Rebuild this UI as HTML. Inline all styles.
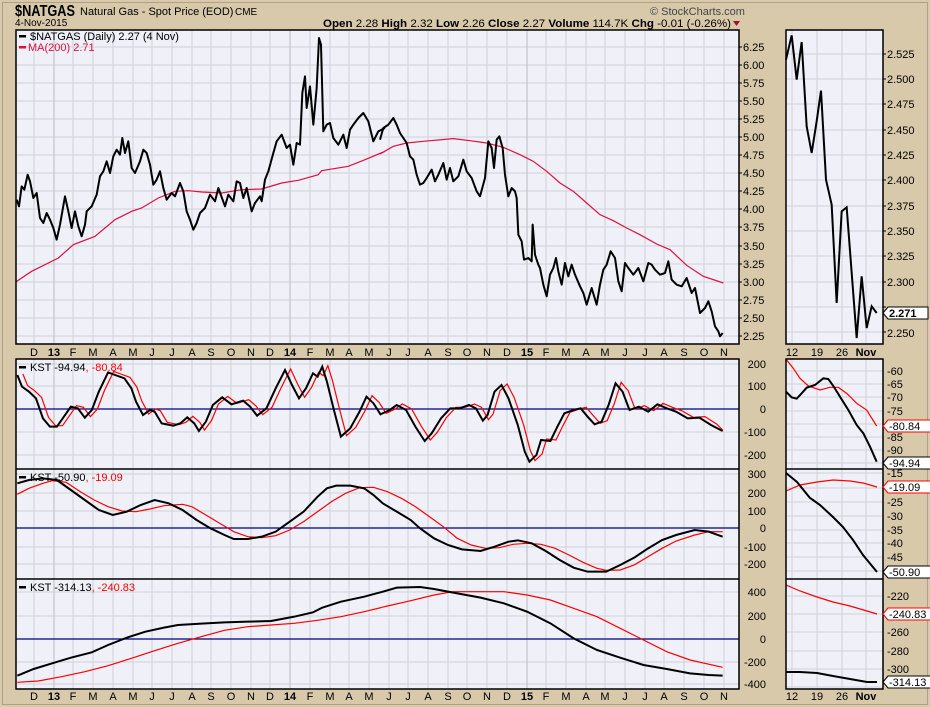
<!DOCTYPE html>
<html><head><meta charset="utf-8"><style>
html,body{margin:0;padding:0;background:#d8c9ab;}
svg{display:block;font-family:"Liberation Sans",sans-serif;}
</style></head><body>
<svg width="930" height="707" viewBox="0 0 930 707" xmlns="http://www.w3.org/2000/svg">
<rect x="0" y="0" width="930" height="707" fill="#d8c9ab"/>
<rect x="2.5" y="2.5" width="925" height="702" fill="none" stroke="#b0a08a" stroke-width="1"/>
<!-- header -->
<text x="15" y="16" font-size="16" font-weight="bold" fill="#000" textLength="60" lengthAdjust="spacingAndGlyphs">$NATGAS</text>
<text x="80" y="15" font-size="11" fill="#000">Natural Gas - Spot Price (EOD)</text>
<text x="235" y="15" font-size="10" fill="#000">CME</text>
<text x="650" y="15" font-size="11" fill="#444">© StockCharts.com</text>
<text x="15" y="26" font-size="10" fill="#000">4-Nov-2015</text>
<text x="323" y="27" font-size="11" fill="#000" textLength="408" lengthAdjust="spacingAndGlyphs"><tspan font-weight="bold">Open</tspan> 2.28 <tspan font-weight="bold">High</tspan> 2.32 <tspan font-weight="bold">Low</tspan> 2.26 <tspan font-weight="bold">Close</tspan> 2.27 <tspan font-weight="bold">Volume</tspan> 114.7K <tspan font-weight="bold">Chg</tspan> -0.01 (-0.26%)</text>
<path d="M733 21h7l-3.5 5z" fill="#a01030"/>

<!-- panel backgrounds -->
<rect x="16" y="30" width="723" height="314" fill="#eff0f8"/>
<rect x="16" y="359" width="723" height="330" fill="#eff0f8"/>
<rect x="786" y="30" width="97" height="314" fill="#eff0f8"/>
<rect x="786" y="359" width="97" height="330" fill="#eff0f8"/>

<path stroke="#d2d2d8" stroke-width="1" fill="none" d="M34 30V344M54 30V344M73 30V344M93 30V344M113 30V344M133 30V344M152 30V344M172 30V344M192 30V344M211 30V344M231 30V344M251 30V344M270 30V344M290 30V344M310 30V344M330 30V344M349 30V344M369 30V344M389 30V344M408 30V344M428 30V344M448 30V344M467 30V344M487 30V344M507 30V344M527 30V344M546 30V344M566 30V344M586 30V344M605 30V344M625 30V344M645 30V344M664 30V344M684 30V344M704 30V344M724 30V344
M34 359V689M54 359V689M73 359V689M93 359V689M113 359V689M133 359V689M152 359V689M172 359V689M192 359V689M211 359V689M231 359V689M251 359V689M270 359V689M290 359V689M310 359V689M330 359V689M349 359V689M369 359V689M389 359V689M408 359V689M428 359V689M448 359V689M467 359V689M487 359V689M507 359V689M527 359V689M546 359V689M566 359V689M586 359V689M605 359V689M625 359V689M645 359V689M664 359V689M684 359V689M704 359V689M724 359V689
M16 47H739M16 65H739M16 83H739M16 101H739M16 119H739M16 137H739M16 155H739M16 173H739M16 191H739M16 209H739M16 227H739M16 246H739M16 264H739M16 282H739M16 300H739M16 318H739M16 336H739
M16 364H739M16 386H739M16 432H739M16 455H739
M16 474H739M16 493H739M16 511H739M16 547H739M16 564H739
M16 592H739M16 616H739M16 662H739M16 684H739
M792 30V344M817 30V344M842 30V344M866 30V344M792 359V689M817 359V689M842 359V689M866 359V689
M786 54H883M786 79H883M786 104H883M786 130H883M786 155H883M786 180H883M786 206H883M786 231H883M786 256H883M786 282H883M786 307H883M786 332H883
M786 371H883M786 384H883M786 397H883M786 411H883M786 424H883M786 437H883M786 450H883M786 463H883
M786 473H883M786 488H883M786 502H883M786 516H883M786 530H883M786 543H883M786 557H883M786 571H883
M786 596H883M786 614H883M786 632H883M786 651H883M786 669H883M786 687H883"/>
<path stroke="#c4c4c8" stroke-width="1.2" d="M54 30V344M290 30V344M527 30V344M54 359V689M290 359V689M527 359V689"/>

<path stroke="#000080" stroke-width="1.2" d="M16 409H739M16 528H739M16 639H739"/>

<!-- main price -->
<g transform="translate(15,28) scale(0.33333)">
<polyline fill="none" stroke="#e0103c" stroke-width="1.2" vector-effect="non-scaling-stroke" points="5,760 50,730 130,690 175,650 240,625 300,575 350,550 380,540 430,510 480,490 520,488 560,492 620,495 680,485 740,483 800,465 850,457 910,440 920,428 1000,415 1050,395 1110,370"/>
<polyline fill="none" stroke="#000" stroke-width="2" vector-effect="non-scaling-stroke" stroke-linejoin="round" points="5,515 12,535 20,475 28,485 38,440 45,460 55,510 65,495 75,570 85,585 95,555 105,575 115,600 125,635 135,590 150,505 160,550 170,600 180,550 190,595 200,625 210,590 215,550 230,535 245,500 255,445 265,430 275,400 285,435 295,385 305,365 315,380 322,330 330,375 340,340 350,420 360,435 375,400 385,365 395,375 405,410 415,470 425,455 435,430 445,480 455,515 470,495 480,505 495,465 505,490 515,550 525,575 535,605 545,585 555,555 570,540 585,500 600,520 610,480 630,535 640,500 655,520 665,460 675,465 685,510 695,480 710,550 720,525 735,505 740,520 750,455 760,430 775,375 785,340 800,320 815,360 825,350 835,410 845,345 855,350 862,195 870,145 875,240 885,175 895,290 905,180 912,30 918,50 925,310 935,290 945,285 955,330 970,350 985,320 995,360 1005,305 1015,290 1030,270 1045,255 1060,280 1075,340 1090,310 1110,300"/>
</g>
<g transform="translate(380,28) scale(0.33333)">
<polyline fill="none" stroke="#e0103c" stroke-width="1.2" vector-effect="non-scaling-stroke" points="0,378 40,355 80,345 130,340 220,332 270,338 320,345 370,358 420,380 460,400 500,430 540,465 580,490 620,525 660,560 700,578 740,600 780,620 830,648 870,665 920,712 970,745 1030,765"/>
<polyline fill="none" stroke="#000" stroke-width="2" vector-effect="non-scaling-stroke" stroke-linejoin="round" points="0,335 10,300 25,290 40,270 50,290 60,315 70,330 80,345 90,385 100,395 110,440 120,470 130,465 140,450 155,425 165,460 175,440 190,405 200,455 210,420 220,460 235,445 250,395 260,430 275,450 290,490 300,505 315,450 325,340 335,360 342,420 350,335 358,325 368,360 375,440 385,505 395,480 405,490 410,510 415,620 425,640 432,695 445,690 455,700 458,590 465,680 475,710 480,720 490,770 500,805 510,740 520,720 528,690 535,730 545,770 555,705 565,745 575,710 585,740 600,775 610,795 620,830 635,780 650,830 660,770 670,725 680,710 692,670 705,690 715,760 725,790 735,705 745,720 760,740 775,720 790,760 805,705 815,710 825,725 840,740 855,735 865,700 875,755 890,770 905,775 920,750 935,795 945,780 960,855 975,840 985,820 995,850 1005,895 1015,910 1020,925 1028,915"/>
</g>

<!-- KST1 -->
<g transform="translate(15,355) scale(0.46555,0.33333)" fill="none">
<polyline stroke="#f00" stroke-width="1.2" vector-effect="non-scaling-stroke" transform="translate(12,-3)" points="5,60 15,95 30,110 45,130 60,190 75,215 90,215 105,185 120,155 135,160 150,188 165,165 180,110 200,52 215,60 235,70 250,100 260,140 275,180 290,165 300,170 315,205 340,212 355,205 370,187 385,205 395,228 410,200 425,150 445,127 465,148 490,137 505,155 520,182 540,160 560,100 580,45 595,90 610,130 625,100 640,55 650,65 660,35 670,80 685,165 700,245 720,220 740,170 755,125 770,145 785,178 805,165 820,150 840,165 860,215 880,258 895,235 915,190 935,160 955,160 975,150 990,160 1005,197 1015,180 1030,110 1045,90 1060,130 1080,210 1095,290 1105,320 1120,300 1130,255 1150,258 1165,215 1180,175 1200,165 1215,160 1230,185 1245,208 1260,200 1275,150 1290,85 1305,110 1320,165 1340,155 1360,170 1380,148 1400,160 1420,170 1445,190 1470,188 1495,210 1508,228"/>
<polyline stroke="#000" stroke-width="2" vector-effect="non-scaling-stroke" points="5,60 15,95 30,110 45,130 60,190 75,215 90,215 105,185 120,155 135,160 150,188 165,165 180,110 200,52 215,60 235,70 250,100 260,140 275,180 290,165 300,170 315,205 340,212 355,205 370,187 385,205 395,228 410,200 425,150 445,127 465,148 490,137 505,155 520,182 540,160 560,100 580,45 595,90 610,130 625,100 640,55 650,65 660,35 670,80 685,165 700,245 720,220 740,170 755,125 770,145 785,178 805,165 820,150 840,165 860,215 880,258 895,235 915,190 935,160 955,160 975,150 990,160 1005,197 1015,180 1030,110 1045,90 1060,130 1080,210 1095,290 1105,320 1120,300 1130,255 1150,258 1165,215 1180,175 1200,165 1215,160 1230,185 1245,208 1260,200 1275,150 1290,85 1305,110 1320,165 1340,155 1360,170 1380,148 1400,160 1420,170 1445,190 1470,188 1495,210 1520,228"/>
</g>
<!-- KST2 & KST3 -->
<g transform="translate(15,465) scale(0.46555,0.33333)" fill="none">
<polyline stroke="#f00" stroke-width="1.2" vector-effect="non-scaling-stroke" points="5,88 30,70 60,55 80,47 110,52 140,80 170,105 200,125 230,138 260,140 290,132 320,122 360,118 380,125 410,150 440,175 470,200 500,215 530,218 560,212 590,195 620,170 650,140 680,110 710,85 740,68 770,67 800,80 830,100 860,125 890,155 920,185 950,220 980,240 1010,250 1040,248 1070,238 1100,235 1130,238 1160,250 1190,270 1220,292 1250,310 1270,316 1300,315 1330,300 1360,275 1390,250 1420,228 1460,210 1490,200 1520,200"/>
<polyline stroke="#000" stroke-width="2" vector-effect="non-scaling-stroke" points="5,55 30,45 60,40 90,45 120,75 150,105 180,135 210,150 240,140 270,120 300,105 330,115 360,135 390,165 420,190 450,210 470,222 500,222 530,215 560,200 590,170 620,140 650,95 670,70 690,62 720,62 750,70 770,90 790,115 820,140 850,165 870,190 900,220 930,240 960,253 1000,258 1030,245 1060,230 1080,226 1110,235 1140,258 1170,285 1200,308 1230,320 1270,320 1300,300 1330,278 1360,250 1390,225 1420,210 1460,195 1490,200 1520,215"/>
<polyline stroke="#f00" stroke-width="1.2" vector-effect="non-scaling-stroke" points="5,652 50,648 100,635 150,620 200,602 250,580 300,557 350,535 400,515 450,496 500,485 550,480 600,475 650,466 700,455 750,440 800,423 850,407 900,390 940,380 1000,380 1050,380 1100,390 1150,405 1200,430 1250,455 1300,490 1350,525 1400,560 1450,585 1520,607"/>
<polyline stroke="#000" stroke-width="2" vector-effect="non-scaling-stroke" points="5,632 40,612 80,595 120,578 165,562 200,540 240,518 280,500 320,488 350,480 400,476 450,472 500,470 550,468 600,455 640,442 660,428 700,410 750,395 790,380 820,368 870,366 900,372 950,385 1000,398 1050,415 1100,440 1150,475 1200,520 1250,555 1300,578 1350,600 1400,612 1450,625 1490,630 1520,632"/>
</g>

<!-- small panels -->
<g transform="translate(780,28) scale(0.33333)">
<polyline fill="none" stroke="#000" stroke-width="2" vector-effect="non-scaling-stroke" points="18,95 35,22 50,155 65,42 80,295 95,375 110,280 123,188 138,455 155,530 170,825 185,550 200,538 230,930 245,745 260,900 275,835 290,855"/>
</g>
<g transform="translate(700,300) scale(0.33333)" fill="none">
<polyline stroke="#f00" stroke-width="1.2" vector-effect="non-scaling-stroke" points="260,180 280,205 300,235 325,258 360,270 390,262 415,262 440,280 470,310 500,330 530,378"/>
<polyline stroke="#000" stroke-width="2" vector-effect="non-scaling-stroke" points="258,275 275,292 290,296 305,280 320,263 345,255 370,235 385,237 400,258 420,290 445,330 470,375 490,400 510,440 530,485"/>
</g>
<polyline fill="none" stroke="#f00" stroke-width="1.2" points="786,491 800,485 817,482 833,480 850,481 863,483 877,487"/>
<polyline fill="none" stroke="#000" stroke-width="2" points="786,473 797,482 810,498 813,500 820,505 833,517 843,527 853,540 863,555 877,572"/>
<polyline fill="none" stroke="#f00" stroke-width="1.2" points="786,585 800,591 817,597 833,602 850,606 867,611 877,614"/>
<polyline fill="none" stroke="#000" stroke-width="2" points="786,672 800,672 817,673 833,676 850,679 867,682 877,682"/>

<!-- panel borders -->
<g fill="none" stroke="#000" stroke-width="1.5">
<rect x="16" y="30" width="723" height="314"/>
<rect x="16" y="359" width="723" height="330"/>
<path d="M16 469H739M16 579H739M786 469H883M786 579H883"/>
<rect x="786" y="30" width="97" height="314"/>
<rect x="786" y="359" width="97" height="330"/>
</g>

<!-- legends -->
<g font-size="11">
<rect x="19" y="35" width="7" height="2.5" fill="#000"/>
<text x="30" y="40" fill="#000">$NATGAS (Daily) 2.27 (4 Nov)</text>
<rect x="19" y="46" width="7" height="2.5" fill="#e0103c"/>
<text x="28" y="51" fill="#e0103c">MA(200) 2.71</text>
<rect x="19" y="366" width="7" height="2.5" fill="#000"/>
<text x="30" y="371" fill="#000">KST -94.94<tspan fill="#f00">, -80.84</tspan></text>
<rect x="19" y="476" width="7" height="2.5" fill="#000"/>
<text x="30" y="481" fill="#000">KST -50.90<tspan fill="#f00">, -19.09</tspan></text>
<rect x="19" y="586" width="7" height="2.5" fill="#000"/>
<text x="30" y="591" fill="#000">KST -314.13<tspan fill="#f00">, -240.83</tspan></text>
</g>

<g font-size="11" fill="#000">
<text x="743" y="51">6.25</text><text x="743" y="69">6.00</text><text x="743" y="87">5.75</text><text x="743" y="105">5.50</text><text x="743" y="123">5.25</text><text x="743" y="141">5.00</text><text x="743" y="159">4.75</text><text x="743" y="177">4.50</text><text x="743" y="195">4.25</text><text x="743" y="213">4.00</text><text x="743" y="231">3.75</text><text x="743" y="250">3.50</text><text x="743" y="268">3.25</text><text x="743" y="286">3.00</text><text x="743" y="304">2.75</text><text x="743" y="322">2.50</text><text x="743" y="340">2.25</text>
</g>
<g font-size="11" fill="#000" text-anchor="end">
<text x="766" y="368">200</text><text x="766" y="390">100</text><text x="766" y="413">0</text><text x="766" y="436">-100</text><text x="766" y="459">-200</text>
<text x="766" y="478">300</text><text x="766" y="497">200</text><text x="766" y="515">100</text><text x="766" y="532">0</text><text x="766" y="551">-100</text><text x="766" y="568">-200</text>
<text x="766" y="596">400</text><text x="766" y="620">200</text><text x="766" y="643">0</text><text x="766" y="666">-200</text><text x="766" y="688">-400</text>
</g>
<path stroke="#000" stroke-width="1" d="M739 47h3M739 65h3M739 83h3M739 101h3M739 119h3M739 137h3M739 155h3M739 173h3M739 191h3M739 209h3M739 227h3M739 246h3M739 264h3M739 282h3M739 300h3M739 318h3M739 336h3M883 54h3M883 79h3M883 104h3M883 130h3M883 155h3M883 180h3M883 206h3M883 231h3M883 256h3M883 282h3M883 307h3M883 332h3"/>

<g font-size="11" fill="#000">
<text x="887" y="58">2.525</text><text x="887" y="83">2.500</text><text x="887" y="108">2.475</text><text x="887" y="134">2.450</text><text x="887" y="159">2.425</text><text x="887" y="184">2.400</text><text x="887" y="210">2.375</text><text x="887" y="235">2.350</text><text x="887" y="260">2.325</text><text x="887" y="286">2.300</text><text x="887" y="337">2.250</text>
<text x="887" y="375">-60</text><text x="887" y="388">-65</text><text x="887" y="401">-70</text><text x="887" y="415">-75</text><text x="887" y="441">-85</text><text x="887" y="454">-90</text>
<text x="887" y="477">-15</text><text x="887" y="506">-25</text><text x="887" y="520">-30</text><text x="887" y="534">-35</text><text x="887" y="547">-40</text><text x="887" y="561">-45</text>
<text x="887" y="600">-220</text><text x="887" y="636">-260</text><text x="887" y="655">-280</text><text x="887" y="673">-300</text>
</g>
<g font-size="11">
<path d="M883 313l5-6h40v12h-40z" fill="#fff" stroke="#000"/><text x="889" y="317" font-weight="bold" fill="#000">2.271</text>
<path d="M883 426l5-6h43v12h-43z" fill="#fff" stroke="#f00"/><text x="889" y="430" fill="#000">-80.84</text>
<path d="M883 463l5-6h43v12h-43z" fill="#fff" stroke="#000"/><text x="889" y="467" fill="#000">-94.94</text>
<path d="M883 487l5-6h43v12h-43z" fill="#fff" stroke="#f00"/><text x="889" y="491" fill="#000">-19.09</text>
<path d="M883 572l5-6h43v12h-43z" fill="#fff" stroke="#000"/><text x="889" y="576" fill="#000">-50.90</text>
<path d="M883 614l5-6h44v12h-44z" fill="#fff" stroke="#f00"/><text x="889" y="618" fill="#000">-240.83</text>
<path d="M883 682l5-6h44v12h-44z" fill="#fff" stroke="#000"/><text x="889" y="686" fill="#000">-314.13</text>
</g>

<g font-size="11" fill="#000" text-anchor="middle" transform="translate(0,356)">
<text x="34">D</text><text x="54" font-weight="bold">13</text><text x="73">F</text><text x="93">M</text><text x="113">A</text><text x="133">M</text><text x="152">J</text><text x="172">J</text><text x="192">A</text><text x="211">S</text><text x="231">O</text><text x="251">N</text><text x="270">D</text><text x="290" font-weight="bold">14</text><text x="310">F</text><text x="330">M</text><text x="349">A</text><text x="369">M</text><text x="389">J</text><text x="408">J</text><text x="428">A</text><text x="448">S</text><text x="467">O</text><text x="487">N</text><text x="507">D</text><text x="527" font-weight="bold">15</text><text x="546">F</text><text x="566">M</text><text x="586">A</text><text x="605">M</text><text x="625">J</text><text x="645">J</text><text x="664">A</text><text x="684">S</text><text x="704">O</text><text x="724">N</text>
<text x="792">12</text><text x="817">19</text><text x="842">26</text><text x="866" font-weight="bold">Nov</text>
</g>
<g font-size="11" fill="#000" text-anchor="middle" transform="translate(0,700)">
<text x="34">D</text><text x="54" font-weight="bold">13</text><text x="73">F</text><text x="93">M</text><text x="113">A</text><text x="133">M</text><text x="152">J</text><text x="172">J</text><text x="192">A</text><text x="211">S</text><text x="231">O</text><text x="251">N</text><text x="270">D</text><text x="290" font-weight="bold">14</text><text x="310">F</text><text x="330">M</text><text x="349">A</text><text x="369">M</text><text x="389">J</text><text x="408">J</text><text x="428">A</text><text x="448">S</text><text x="467">O</text><text x="487">N</text><text x="507">D</text><text x="527" font-weight="bold">15</text><text x="546">F</text><text x="566">M</text><text x="586">A</text><text x="605">M</text><text x="625">J</text><text x="645">J</text><text x="664">A</text><text x="684">S</text><text x="704">O</text><text x="724">N</text>
<text x="792">12</text><text x="817">19</text><text x="842">26</text><text x="866" font-weight="bold">Nov</text>
</g>
</svg>
</body></html>
